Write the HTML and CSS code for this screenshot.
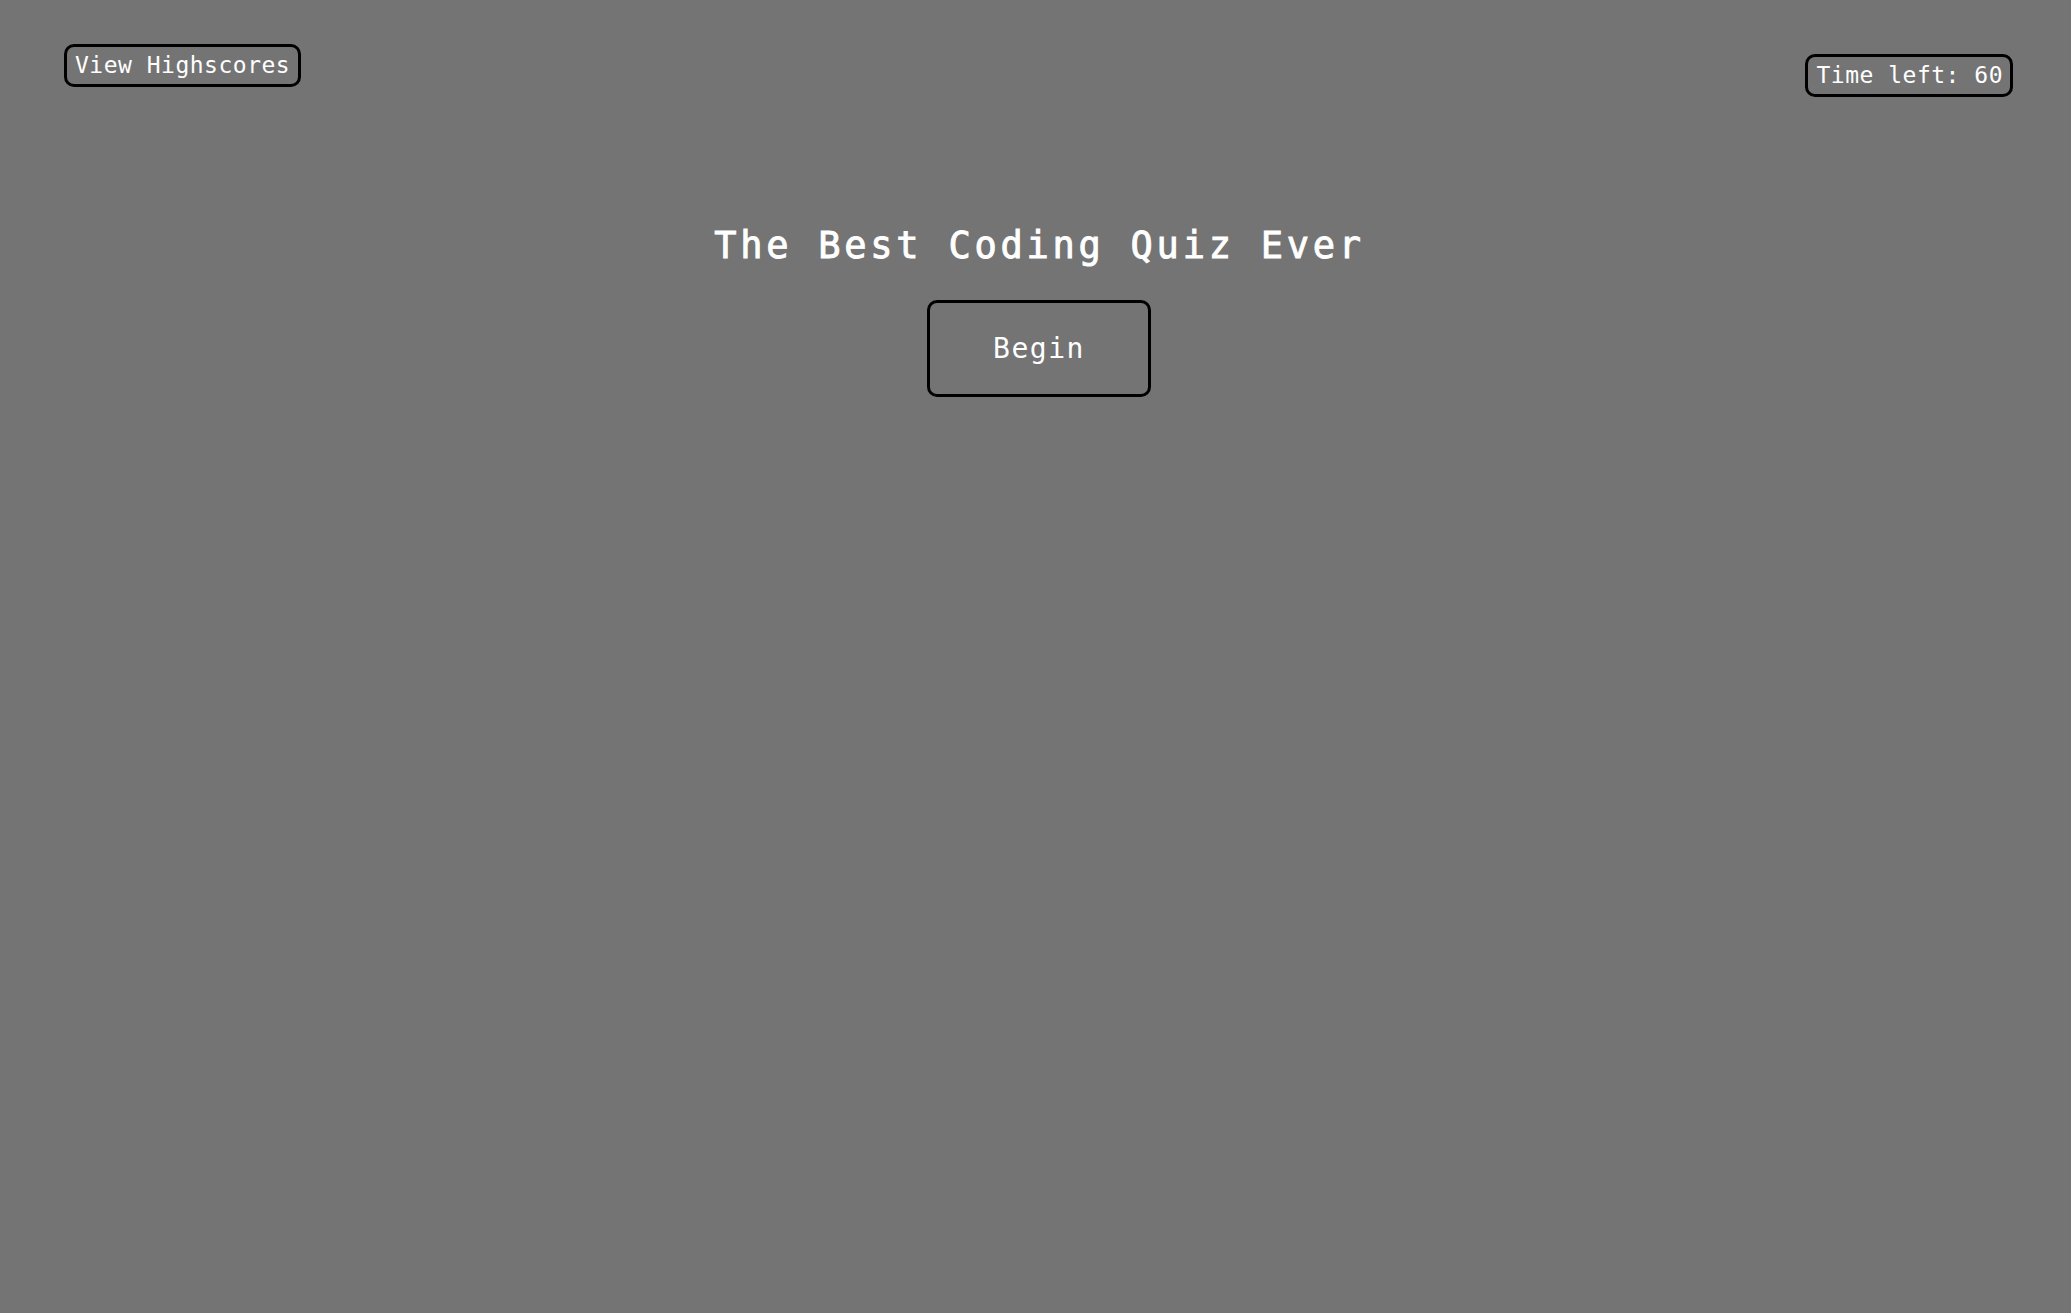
FILE: index.html
```html
<!DOCTYPE html>
<html lang="en">
<head>
<meta charset="utf-8">
<title>Coding Quiz</title>
<link rel="stylesheet" href="styles.css">
</head>
<body>
<header class="top-bar">
  <button class="pill">View Highscores</button>
  <div class="pill timer">Time left: 60</div>
</header>
<main class="intro">
  <h1 class="title">The Best Coding Quiz Ever</h1>
  <button class="begin">Begin</button>
</main>
</body>
</html>
```
FILE: styles.css
```css
html, body {
  margin: 0;
  padding: 0;
}
body {
  background: #747474;
  color: #ffffff;
  font-family: "DejaVu Sans Mono", "Liberation Mono", monospace;
  min-height: 1313px;
}
.top-bar {
  display: flex;
  justify-content: space-between;
  align-items: flex-start;
  padding: 44px 58px 0 64px;
}
.pill {
  box-sizing: border-box;
  background: transparent;
  color: #ffffff;
  border: 3px solid #000000;
  border-radius: 10px;
  font-family: inherit;
  font-size: 23px;
  line-height: 29px;
  letter-spacing: 0.5px;
  padding: 4px 8px;
  margin: 0;
  cursor: pointer;
}
.timer {
  margin-top: 10px;
  padding: 4px 7px 4px 8px;
}
.intro {
  display: flex;
  flex-direction: column;
  align-items: center;
}
.title {
  margin: 127px 0 0 8px;
  font-size: 37px;
  line-height: 44px;
  font-weight: normal;
  -webkit-text-stroke: 0.9px #ffffff;
  letter-spacing: 3.75px;
}
.begin {
  box-sizing: border-box;
  margin: 32px 0 0 7px;
  width: 224px;
  height: 97px;
  background: transparent;
  color: #ffffff;
  border: 3.5px solid #000000;
  border-radius: 10px;
  font-family: inherit;
  font-size: 28px;
  letter-spacing: 1.5px;
  cursor: pointer;
}
```
